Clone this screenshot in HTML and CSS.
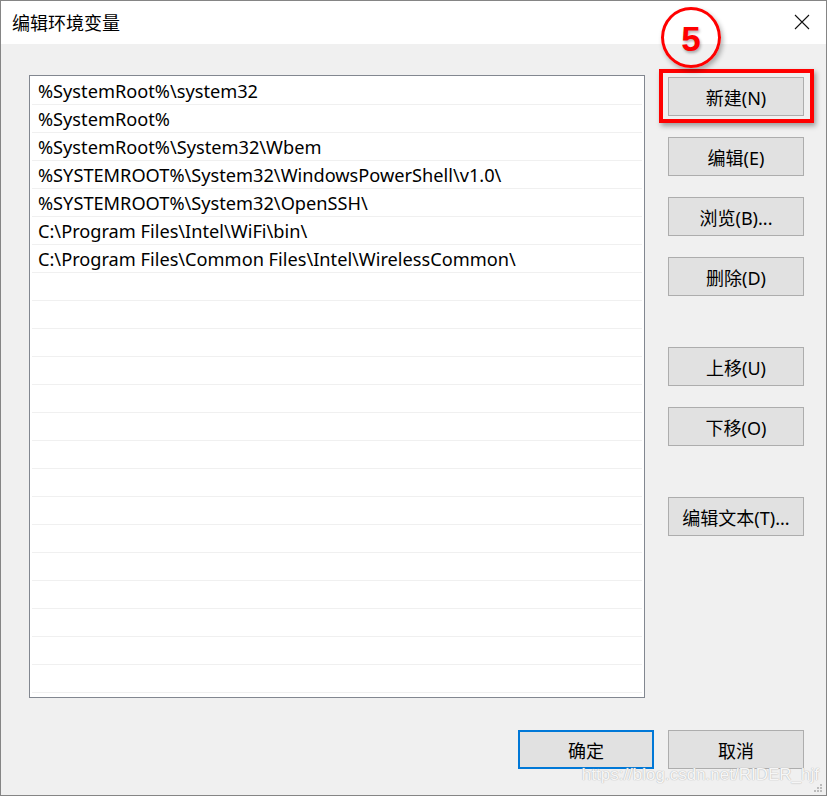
FILE: index.html
```html
<!DOCTYPE html>
<html lang="zh-CN">
<head>
    <meta charset="UTF-8">
    <title>编辑环境变量</title>
    <link rel="stylesheet" href="styles.css">
</head>
<body>

    <div class="window">
        <!-- Title bar -->
        <div class="titlebar">
            <span class="title">编辑环境变量</span>
            <svg class="close" width="16" height="16" viewBox="0 0 16 16">
                <path d="M1 1 L15 15 M15 1 L1 15" stroke="#111" stroke-width="1.1" fill="none"/>
            </svg>
        </div>

        <!-- Dialog body -->
        <div class="dialog">
            <div class="main">
                <div class="listbox">
                    <div class="row">%SystemRoot%\system32</div>
                    <div class="row">%SystemRoot%</div>
                    <div class="row">%SystemRoot%\System32\Wbem</div>
                    <div class="row">%SYSTEMROOT%\System32\WindowsPowerShell\v1.0\</div>
                    <div class="row">%SYSTEMROOT%\System32\OpenSSH\</div>
                    <div class="row">C:\Program Files\Intel\WiFi\bin\</div>
                    <div class="row">C:\Program Files\Common Files\Intel\WirelessCommon\</div>
                    <div class="row"></div>
                    <div class="row"></div>
                    <div class="row"></div>
                    <div class="row"></div>
                    <div class="row"></div>
                    <div class="row"></div>
                    <div class="row"></div>
                    <div class="row"></div>
                    <div class="row"></div>
                    <div class="row"></div>
                    <div class="row"></div>
                    <div class="row"></div>
                    <div class="row"></div>
                    <div class="row"></div>
                    <div class="row"></div>
                </div>

                <div class="side">
                    <div class="highlight">
                        <button class="btn">新建(N)</button>
                        <div class="step">5</div>
                    </div>
                    <button class="btn">编辑(E)</button>
                    <button class="btn">浏览(B)...</button>
                    <button class="btn">删除(D)</button>
                    <button class="btn gap-top">上移(U)</button>
                    <button class="btn">下移(O)</button>
                    <button class="btn gap-top">编辑文本(T)...</button>
                </div>
            </div>

            <div class="footer">
                <button class="btn default">确定</button>
                <button class="btn">取消</button>
            </div>
        </div>

        <div class="watermark">https://blog.csdn.net/RIDER_hjf</div>
        <svg class="grip" width="10" height="10" viewBox="0 0 10 10">
            <rect x="7" y="1" width="2" height="2" fill="#bcbcbc"/>
            <rect x="4" y="4" width="2" height="2" fill="#bcbcbc"/>
            <rect x="7" y="4" width="2" height="2" fill="#bcbcbc"/>
            <rect x="1" y="7" width="2" height="2" fill="#bcbcbc"/>
            <rect x="4" y="7" width="2" height="2" fill="#bcbcbc"/>
            <rect x="7" y="7" width="2" height="2" fill="#bcbcbc"/>
        </svg>
    </div>

</body>
</html>
```

FILE: styles.css
```css
/* Global Styles */
body {
    margin: 0;
    padding: 0;
    font-family: "Noto Sans", "Noto Sans CJK SC", sans-serif;
    background-color: #ffffff;
}
.window {
    position: relative;
    width: 827px;
    height: 796px;
    box-sizing: border-box;
    border: 1px solid #858585;
    background-color: #f0f0f0;
    display: flex;
    flex-direction: column;
    overflow: hidden;
}

/* Title bar */
.titlebar {
    height: 43px;
    background-color: #ffffff;
    display: flex;
    align-items: center;
    justify-content: space-between;
    padding: 0 16px 0 11px;
}
.title {
    font-family: "Noto Sans CJK SC", sans-serif;
    font-size: 18px;
    color: #000;
    margin-top: -2px;
}
.close {
    margin-top: -2px;
}

/* Dialog body */
.dialog {
    flex: 1;
    display: flex;
    flex-direction: column;
    padding: 31px 22px 0 28px;
}
.main {
    display: flex;
    gap: 23px;
}
.listbox {
    width: 616px;
    height: 623px;
    box-sizing: border-box;
    border: 1px solid #828790;
    background-color: #ffffff;
    padding-top: 1px;
}
.row {
    height: 27px;
    margin: 0 2px;
    border-bottom: 1px solid #f0f0f0;
    padding-left: 6px;
    font-size: 18.2px;
    line-height: 28px;
    color: #000;
    white-space: nowrap;
}

/* Buttons */
.side {
    display: flex;
    flex-direction: column;
    gap: 21px;
    padding-top: 2px;
}
.btn {
    width: 136px;
    height: 39px;
    box-sizing: border-box;
    border: 1px solid #adadad;
    background-color: #e1e1e1;
    font-family: "Noto Sans", "Noto Sans CJK SC", sans-serif;
    font-size: 18px;
    color: #000;
    padding: 0;
    margin: 0;
}
.gap-top {
    margin-top: 30px;
}
.highlight {
    position: relative;
}
.highlight::before {
    content: "";
    position: absolute;
    left: -9px;
    top: -8px;
    width: 155px;
    height: 54px;
    box-sizing: border-box;
    border: 4px solid #ff0000;
    box-shadow: 2px 3px 5px rgba(0, 0, 0, 0.35);
}
.highlight .btn {
    position: relative;
}
.step {
    position: absolute;
    left: -7px;
    top: -70px;
    width: 54px;
    height: 55px;
    border: 3px solid #ff0000;
    border-radius: 50%;
    box-shadow: 2px 3px 5px rgba(0, 0, 0, 0.3);
    font-family: "Liberation Sans", Arial, sans-serif;
    font-weight: bold;
    font-size: 35px;
    line-height: 58px;
    text-align: center;
    color: #ff0000;
    text-shadow: 1px 2px 3px rgba(0, 0, 0, 0.3);
}

/* Footer */
.footer {
    display: flex;
    justify-content: flex-end;
    gap: 14px;
    margin-top: 32px;
}
.footer .default {
    border: 2px solid #0078d7;
}

.watermark {
    position: absolute;
    right: 7px;
    bottom: 10px;
    font-family: "Liberation Sans", Arial, sans-serif;
    font-size: 17px;
    color: rgba(255, 255, 255, 0.9);
    text-shadow: 0 0 1px #b8b8b8, 0 0 1px #b8b8b8;
}
.grip {
    position: absolute;
    right: 3px;
    bottom: 2px;
}
```
